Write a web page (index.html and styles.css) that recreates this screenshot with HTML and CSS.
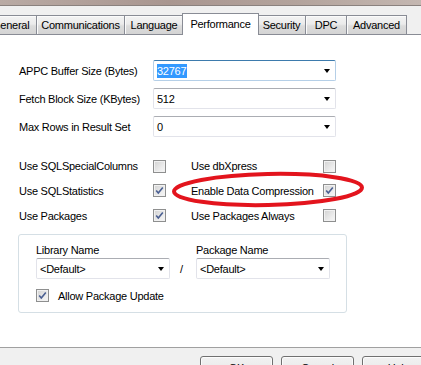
FILE: index.html
```html
<!DOCTYPE html>
<html lang="en">
<head>
  <meta charset="UTF-8" />
  <title>Performance</title>
  <link rel="stylesheet" href="styles.css">
</head>
<body>
  <div class="window">
    <div class="frame-top"></div>

    <div class="tabs">
      <div class="tab first">General</div>
      <div class="tab w-comm">Communications</div>
      <div class="tab w-lang">Language</div>
      <div class="tab active">Performance</div>
      <div class="tab w-sec">Security</div>
      <div class="tab w-dpc">DPC</div>
      <div class="tab w-adv">Advanced</div>
    </div>

    <div class="page">
      <div class="fields">
        <span class="label">APPC Buffer Size (Bytes)</span>
        <div class="combo focused"><span class="sel">32767</span><i class="arrow"></i></div>
        <span class="label">Fetch Block Size (KBytes)</span>
        <div class="combo"><span>512</span><i class="arrow"></i></div>
        <span class="label">Max Rows in Result Set</span>
        <div class="combo"><span>0</span><i class="arrow"></i></div>
      </div>

      <div class="options">
        <span class="label">Use SQLSpecialColumns</span>
        <span class="check"></span>
        <span class="label">Use dbXpress</span>
        <span class="check"></span>

        <span class="label">Use SQLStatistics</span>
        <span class="check on"><svg viewBox="0 0 11 11"><path d="M2.2 5.4 L4.3 8 L8.8 2.4" /></svg></span>
        <span class="label">Enable Data Compression</span>
        <span class="check on"><svg viewBox="0 0 11 11"><path d="M2.2 5.4 L4.3 8 L8.8 2.4" /></svg></span>

        <span class="label">Use Packages</span>
        <span class="check on"><svg viewBox="0 0 11 11"><path d="M2.2 5.4 L4.3 8 L8.8 2.4" /></svg></span>
        <span class="label">Use Packages Always</span>
        <span class="check"></span>

        <!-- hand drawn marker round the compression option -->
        <svg class="marker" viewBox="0 0 200 43">
          <ellipse cx="100" cy="21.5" rx="94" ry="15.5" transform="rotate(-1.2 100 21.5)" />
        </svg>
      </div>

      <div class="group">
        <div class="group-grid">
          <span class="label">Library Name</span>
          <span></span>
          <span class="label">Package Name</span>
          <div class="combo"><span>&lt;Default&gt;</span><i class="arrow"></i></div>
          <span class="slash">/</span>
          <div class="combo"><span>&lt;Default&gt;</span><i class="arrow"></i></div>
        </div>
        <div class="allow">
          <span class="check on"><svg viewBox="0 0 11 11"><path d="M2.2 5.4 L4.3 8 L8.8 2.4" /></svg></span>
          <span class="label">Allow Package Update</span>
        </div>
      </div>
    </div>

    <div class="buttons">
      <button class="btn">OK</button>
      <button class="btn">Cancel</button>
      <button class="btn">Help</button>
    </div>
  </div>
</body>
</html>
```

FILE: styles.css
```css
* {
  margin: 0;
  padding: 0;
  box-sizing: border-box;
}

html, body {
  width: 421px;
  height: 365px;
  overflow: hidden;
}

body {
  font-family: 'Liberation Sans', Arial, sans-serif;
  font-size: 11px;
  letter-spacing: -0.25px;
  color: #000;
  background: #f0f0f0;
}

.window {
  width: 421px;
  height: 365px;
  overflow: hidden;
}

.frame-top {
  height: 6px;
  background: linear-gradient(to right, #b9aaa4, #a99690 40%, #b3a39c 70%, #c4b7b1);
  border-bottom: 1px solid #8a817e;
}

/* tab strip */
.tabs {
  display: flex;
  align-items: flex-end;
  height: 28px;
  margin-left: -13px;
}

.tab {
  height: 19px;
  line-height: 18px;
  text-align: center;
  border: 1px solid #898c95;
  border-bottom: none;
  margin-right: -1px;
  background: linear-gradient(#f3f3f3, #ebebeb 45%, #dcdcdc 55%, #d4d4d4);
  box-shadow: inset 1px 1px 0 #fbfbfb;
  white-space: nowrap;
}

.tab.first { width: 50px; padding-left: 4px; text-align: left; }
.w-comm { width: 89px; }
.w-lang { width: 60px; }
.w-sec { width: 49px; }
.w-dpc { width: 42px; }
.w-adv { width: 61px; }

.tab.active {
  position: relative;
  z-index: 2;
  width: 77px;
  height: 22px;
  line-height: 20px;
  margin-bottom: -1px;
  margin-left: -1px;
  margin-right: -2px;
  background: #fff;
  box-shadow: none;
}

/* page body */
.page {
  height: 314px;
  background: #fff;
  border-top: 1px solid #898c95;
  border-bottom: 1px solid #a0a0a0;
  padding: 25px 0 0 19px;
}

.label {
  white-space: nowrap;
}

.fields {
  display: grid;
  grid-template-columns: 134px 183px;
  grid-auto-rows: 21px;
  row-gap: 7px;
  align-items: center;
}

.combo {
  position: relative;
  height: 21px;
  display: flex;
  align-items: center;
  padding-left: 3px;
  background: #fff;
  border: 1px solid #e2e3ea;
  border-top-color: #abadb3;
  border-radius: 2px;
}

.combo.focused {
  border-color: #b5cfe7;
  border-top-color: #3d7bad;
}

.combo .sel {
  background: #3399ff;
  color: #fff;
  line-height: 14px;
  padding-right: 1px;
}

.arrow {
  position: absolute;
  right: 5px;
  top: 8px;
  width: 0;
  height: 0;
  border-left: 3.5px solid transparent;
  border-right: 3.5px solid transparent;
  border-top: 4px solid #000;
}

/* check boxes */
.options {
  position: relative;
  margin-top: 17px;
  display: grid;
  grid-template-columns: 134px 38px 132px 13px;
  grid-template-rows: 24px 25px 25px;
  align-items: center;
}

.check {
  display: block;
  width: 13px;
  height: 13px;
  border: 1px solid #8e8f8f;
  background: linear-gradient(135deg, #d2d2d2, #eeeeee 70%, #f6f6f6);
  box-shadow: inset 0 0 0 1px #f1f1f1;
}

.check svg {
  display: block;
  width: 11px;
  height: 11px;
}

.check path {
  fill: none;
  stroke: #4a5f92;
  stroke-width: 1.6;
}

.marker {
  position: absolute;
  left: 149px;
  top: 14px;
  width: 200px;
  height: 43px;
  overflow: visible;
}

.marker ellipse {
  fill: none;
  stroke: #e3141d;
  stroke-width: 4;
}

/* package group */
.group {
  margin: 6px 0 0 -1px;
  width: 329px;
  height: 79px;
  border: 1px solid #d5dfe5;
  border-radius: 3px;
  padding: 8px 0 0 17px;
}

.group-grid {
  display: grid;
  grid-template-columns: 134px 26px 134px;
  grid-template-rows: 13px 21px;
  row-gap: 2px;
  align-items: center;
}

.slash {
  text-align: center;
  padding-right: 3px;
}

.allow {
  display: flex;
  align-items: center;
  gap: 9px;
  margin-top: 10px;
}

/* dialog buttons */
.buttons {
  display: flex;
  gap: 8px;
  padding: 8px 0 0 200px;
}

.btn {
  flex: none;
  width: 73px;
  height: 23px;
  font-family: inherit;
  font-size: 11px;
  letter-spacing: -0.25px;
  color: #000;
  border: 1px solid #707070;
  border-radius: 3px;
  background: linear-gradient(#f2f2f2, #ebebeb 50%, #dddddd 50%, #cfcfcf);
  box-shadow: inset 0 0 0 1px #fcfcfc;
}
```
